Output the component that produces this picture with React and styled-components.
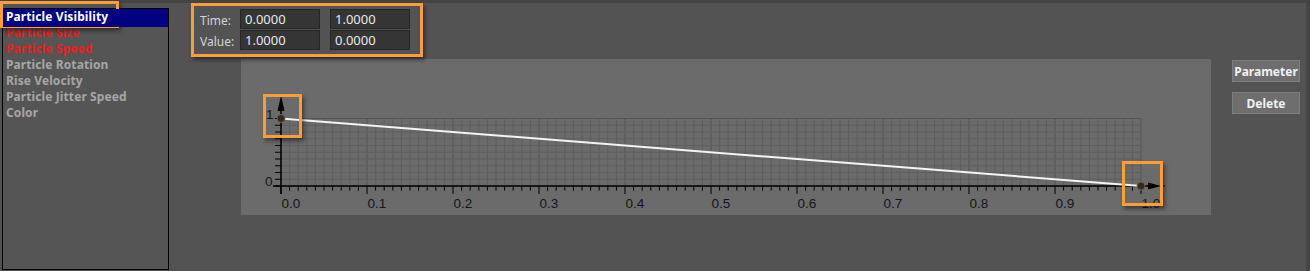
import React from 'react';
import styled, { createGlobalStyle } from 'styled-components';

const GlobalStyle = createGlobalStyle`
	html, body {
		margin: 0;
		padding: 0;
		background: #535353;
	}
	body {
		font-family: 'Noto Sans', 'Open Sans', sans-serif;
	}
`;

const tracks = [
	{ name: 'Particle Visibility', state: 'selected' },
	{ name: 'Particle Size', state: 'animated' },
	{ name: 'Particle Speed', state: 'animated' },
	{ name: 'Particle Rotation' },
	{ name: 'Rise Velocity' },
	{ name: 'Particle Jitter Speed' },
	{ name: 'Color' },
];

const keys = [
	{ time: '0.0000', value: '1.0000' },
	{ time: '1.0000', value: '0.0000' },
];

const Frame = styled.div`
	position: relative;
	width: 1310px;
	height: 271px;
	display: flex;
	flex-direction: column;
	background: #535353;
	overflow: hidden;
`;

const TopStrip = styled.div`
	height: 3px;
	background: #444444;
`;

const Body = styled.div`
	flex: 1;
	display: flex;
`;

const TrackList = styled.ul`
	list-style: none;
	margin: 5px 0 1px 2px;
	padding: 0;
	width: 165px;
	border: 1px solid #000;
	background: #555555;
`;

const colors = {
	selected: '#ffffff',
	animated: '#e8201c',
	idle: '#a6a6a6',
};

const TrackItem = styled.li`
	position: relative;
	z-index: ${({ $state }) => ($state === 'selected' ? 1 : 0)};
	height: ${({ $state }) => ($state === 'selected' ? '18px' : '16px')};
	margin-bottom: ${({ $state }) => ($state === 'selected' ? '-2px' : '0')};
	padding-left: 3px;
	line-height: 16px;
	font-size: 12px;
	font-weight: 700;
	letter-spacing: 0.1px;
	white-space: nowrap;
	color: ${({ $state }) => colors[$state] || colors.idle};
	background: ${({ $state }) => ($state === 'selected' ? '#000080' : 'transparent')};
`;

const Main = styled.div`
	flex: 1;
	display: flex;
	flex-direction: column;
`;

const KeyForm = styled.div`
	display: grid;
	grid-template-columns: 30px 80px 80px;
	grid-auto-rows: 20px;
	column-gap: 10px;
	row-gap: 1px;
	margin: 6px 0 0 31px;
	align-items: center;

	& > label {
		grid-column: 1;
		white-space: nowrap;
		font-size: 12px;
		color: #cfd3da;
		padding-top: 3px;
	}
`;

const KeyInput = styled.input`
	box-sizing: border-box;
	width: 80px;
	height: 20px;
	margin: 0;
	padding: 0 0 0 4px;
	border: 1px solid #262626;
	background: #353535;
	color: #e8e8ea;
	font-family: 'Noto Sans', sans-serif;
	font-size: 13px;
	outline: none;
	grid-column: ${({ $col }) => $col};
`;

const GraphRow = styled.div`
	display: flex;
	align-items: flex-start;
	margin-top: 9px;
	margin-left: 72px;
`;

const GraphPanel = styled.div`
	width: 970px;
	height: 156px;
	background: #6b6b6b;

	svg {
		display: block;
	}
`;

const ButtonColumn = styled.div`
	display: flex;
	flex-direction: column;
	gap: 10px;
	margin: 1px 0 0 21px;
`;

const ToolButton = styled.button`
	box-sizing: border-box;
	width: 68px;
	height: 22px;
	padding: 0;
	border: 1px solid #7d7d7d;
	background: #6e6e6e;
	color: #eef2f6;
	font-family: 'Noto Sans', sans-serif;
	font-size: 12px;
	font-weight: 700;
`;

const RightStrip = styled.div`
	width: 4px;
	background: #464646;
`;

const Callout = styled.div`
	position: absolute;
	box-sizing: border-box;
	border: 3px solid #fa9d3e;
	box-shadow: 2px 3px 4px rgba(0, 0, 0, 0.45);
	pointer-events: none;
`;

// plot geometry, in panel coordinates
const X0 = 40;
const XSTEP = 8.6;
const YTOP = 59.5;
const YBOT = 127;
const YSTEP = (YBOT - YTOP) / 10;

const CurveGraph = () => {
	const minorX = Array.from({ length: 101 }, (_, i) => X0 + i * XSTEP);
	const minorY = Array.from({ length: 11 }, (_, i) => YTOP + i * YSTEP);
	const x1 = X0 + 100 * XSTEP;

	return (
		<svg width='970' height='156' viewBox='0 0 970 156'>
			{minorX.map((x, i) => (
				<line
					key={`v${i}`}
					x1={x}
					x2={x}
					y1={YTOP}
					y2={YBOT}
					stroke={i % 10 === 0 ? '#555555' : '#5f5f5f'}
					strokeWidth='1'
				/>
			))}
			{minorY.map((y, i) => (
				<line key={`h${i}`} x1={X0} x2={x1} y1={y} y2={y} stroke={i === 0 ? '#555555' : '#5f5f5f'} strokeWidth='1' />
			))}

			{/* x axis */}
			<line x1={X0 - 8} x2={x1} y1={YBOT} y2={YBOT} stroke='#000' strokeWidth='1.5' />
			{minorX.map((x, i) => (
				<line
					key={`t${i}`}
					x1={x}
					x2={x}
					y1={YBOT}
					y2={YBOT + (i % 10 === 0 ? 8 : 4.5)}
					stroke='#000'
					strokeWidth='1'
				/>
			))}
			{minorX
				.filter((_, i) => i % 10 === 0)
				.map((x, i) => (
					<text
						key={`l${i}`}
						x={x + 0.5}
						y={149}
						fontFamily='Liberation Sans, sans-serif'
						fontSize='13.5'
						fill='#15151f'
					>
						{(i / 10).toFixed(1)}
					</text>
				))}

			{/* y axis */}
			<line x1={X0} x2={X0} y1={YTOP} y2={YBOT + 8} stroke='#000' strokeWidth='1.5' />
			{minorY.map((y, i) => (
				<line key={`yt${i}`} x1={X0 - 6} x2={X0} y1={y} y2={y} stroke='#000' strokeWidth='1' />
			))}
			<text x='25' y='60' fontFamily='Liberation Sans, sans-serif' fontSize='13.5' fill='#15151f'>
				1
			</text>
			<text x='24' y='127' fontFamily='Liberation Sans, sans-serif' fontSize='13.5' fill='#15151f'>
				0
			</text>

			{/* curve */}
			<line x1={X0} y1={YTOP} x2={x1} y2={YBOT} stroke='#f4f4f4' strokeWidth='2' />

			{/* tangent handles */}
			<line x1={X0} x2={X0} y1={YTOP} y2={48} stroke='#000' strokeWidth='1.5' />
			<polygon points={`${X0},36.5 ${X0 - 3.5},52 ${X0 + 3.5},52`} fill='#000' />
			<line x1={x1} x2={x1 + 10} y1={YBOT} y2={YBOT} stroke='#000' strokeWidth='1.5' />
			<polygon points={`${x1 + 7},${YBOT - 3.5} ${x1 + 20},${YBOT} ${x1 + 7},${YBOT + 3.5}`} fill='#000' />
			<line x1={x1 + 19} x2={x1 + 24} y1={YBOT} y2={YBOT} stroke='#000' strokeWidth='1' />

			{/* keys */}
			<circle cx={X0} cy={YTOP} r='4' fill='#2e2a26' stroke='#7a5d3c' strokeWidth='1' />
			<circle cx={x1} cy={YBOT} r='4' fill='#2e2a26' stroke='#7a5d3c' strokeWidth='1' />
		</svg>
	);
};

export default function App() {
	return (
		<Frame>
			<GlobalStyle />
			<TopStrip />
			<Body>
				<TrackList>
					{tracks.map(({ name, state = 'idle' }) => (
						<TrackItem key={name} $state={state}>
							{name}
						</TrackItem>
					))}
				</TrackList>
				<Main>
					<KeyForm>
						<label>Time:</label>
						{keys.map(({ time }, i) => (
							<KeyInput key={`t${i}`} $col={i + 2} defaultValue={time} readOnly />
						))}
						<label>Value:</label>
						{keys.map(({ value }, i) => (
							<KeyInput key={`v${i}`} $col={i + 2} defaultValue={value} readOnly />
						))}
					</KeyForm>
					<GraphRow>
						<GraphPanel>
							<CurveGraph />
						</GraphPanel>
						<ButtonColumn>
							<ToolButton>Parameter</ToolButton>
							<ToolButton>Delete</ToolButton>
						</ButtonColumn>
					</GraphRow>
				</Main>
				<RightStrip />
			</Body>
			<Callout style={{ left: 0, top: 1, width: 119, height: 27 }} />
			<Callout style={{ left: 191, top: 3, width: 232, height: 54 }} />
			<Callout style={{ left: 263, top: 94, width: 39, height: 44 }} />
			<Callout style={{ left: 1122, top: 161, width: 41, height: 45 }} />
		</Frame>
	);
}
